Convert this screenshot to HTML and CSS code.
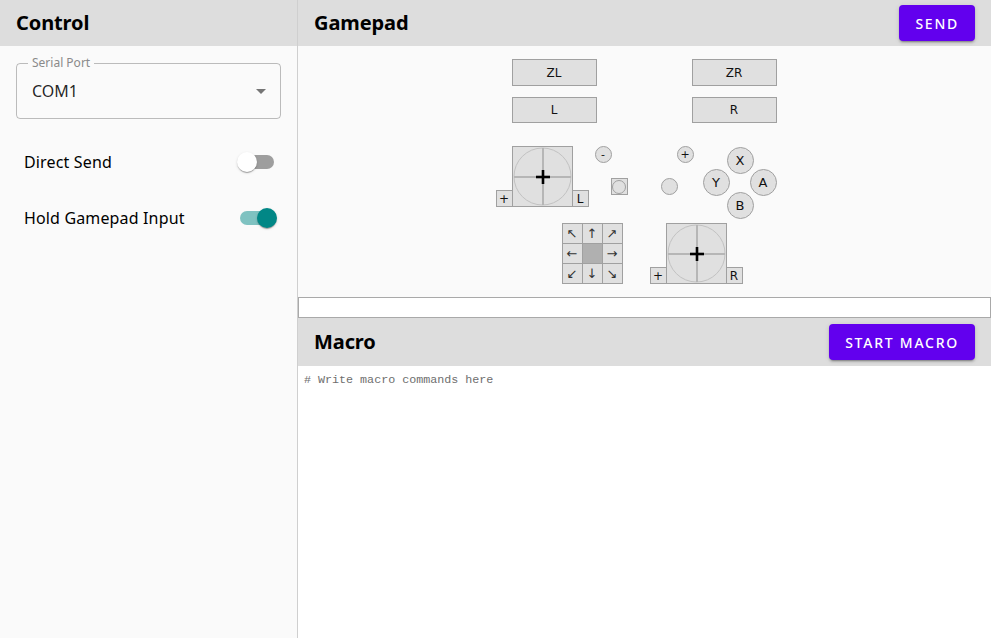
FILE: index.html
```html
<!DOCTYPE html>
<html lang="en">
<head>
<meta charset="utf-8">
<title>Controller</title>
<link rel="stylesheet" href="styles.css">
</head>
<body>
<div class="app">
  <aside class="sidebar">
    <header class="panel-header">
      <h2 class="panel-title">Control</h2>
    </header>
    <div class="sidebar-body">
      <div class="select-box">
        <span class="select-label">Serial Port</span>
        <span class="select-value">COM1</span>
        <svg class="select-arrow" width="10" height="5" viewBox="0 0 10 5"><path d="M0 0l5 5 5-5z" fill="#757575"/></svg>
      </div>
      <div class="switch-list">
        <div class="switch-row">
          <span class="switch-label">Direct Send</span>
          <span class="switch">
            <span class="switch-track"></span>
            <span class="switch-thumb"></span>
          </span>
        </div>
        <div class="switch-row">
          <span class="switch-label">Hold Gamepad Input</span>
          <span class="switch switch-on">
            <span class="switch-track"></span>
            <span class="switch-thumb"></span>
          </span>
        </div>
      </div>
    </div>
  </aside>
  <main class="main">
    <header class="panel-header">
      <h2 class="panel-title">Gamepad</h2>
      <button class="btn">SEND</button>
    </header>
    <section class="gamepad-area">
      <div class="gp-canvas">
        <div class="gp gp-rect gp-zl">ZL</div>
        <div class="gp gp-rect gp-zr">ZR</div>
        <div class="gp gp-rect gp-l">L</div>
        <div class="gp gp-rect gp-r">R</div>

        <div class="gp stick stick-left">
          <svg width="59" height="59" viewBox="0 0 59 59">
            <circle cx="29.5" cy="29.5" r="28.5" fill="#e0e0e0" stroke="#c2c2c2" stroke-width="1"/>
            <line x1="1" y1="30" x2="58" y2="30" stroke="#b6b6b6" stroke-width="2"/>
            <line x1="30" y1="1" x2="30" y2="58" stroke="#b6b6b6" stroke-width="2"/>
            <line x1="23" y1="30" x2="37" y2="30" stroke="#000" stroke-width="2.6"/>
            <line x1="30" y1="23" x2="30" y2="37" stroke="#000" stroke-width="2.6"/>
          </svg>
        </div>
        <div class="gp gp-small gp-lplus">+</div>
        <div class="gp gp-small gp-lstick">L</div>

        <div class="gp gp-circ-sm gp-minus">-</div>
        <div class="gp gp-capture"><span class="capture-dot"></span></div>
        <div class="gp gp-circ-sm gp-home"></div>
        <div class="gp gp-circ-sm gp-plus">+</div>

        <div class="gp gp-face gp-x">X</div>
        <div class="gp gp-face gp-y">Y</div>
        <div class="gp gp-face gp-a">A</div>
        <div class="gp gp-face gp-b">B</div>

        <div class="gp dpad">
          <span class="dcell">↖</span>
          <span class="dcell">↑</span>
          <span class="dcell">↗</span>
          <span class="dcell">←</span>
          <span class="dcell dcenter"></span>
          <span class="dcell">→</span>
          <span class="dcell">↙</span>
          <span class="dcell">↓</span>
          <span class="dcell">↘</span>
        </div>

        <div class="gp stick stick-right">
          <svg width="59" height="59" viewBox="0 0 59 59">
            <circle cx="29.5" cy="29.5" r="28.5" fill="#e0e0e0" stroke="#c2c2c2" stroke-width="1"/>
            <line x1="1" y1="30" x2="58" y2="30" stroke="#b6b6b6" stroke-width="2"/>
            <line x1="30" y1="1" x2="30" y2="58" stroke="#b6b6b6" stroke-width="2"/>
            <line x1="23" y1="30" x2="37" y2="30" stroke="#000" stroke-width="2.6"/>
            <line x1="30" y1="23" x2="30" y2="37" stroke="#000" stroke-width="2.6"/>
          </svg>
        </div>
        <div class="gp gp-small gp-rplus">+</div>
        <div class="gp gp-small gp-rstick">R</div>
      </div>
    </section>
    <input class="raw-input" type="text">
    <header class="panel-header macro-header">
      <h2 class="panel-title">Macro</h2>
      <button class="btn">START MACRO</button>
    </header>
    <textarea class="macro-text" placeholder="# Write macro commands here"></textarea>
  </main>
</div>
</body>
</html>
```

FILE: styles.css
```css
* { box-sizing: border-box; }

html, body {
  margin: 0;
  padding: 0;
  height: 100%;
}

body {
  font-family: "Noto Sans", "Liberation Sans", sans-serif;
  color: rgba(0, 0, 0, 0.87);
  background: #fafafa;
  overflow: hidden;
}

.app {
  display: flex;
  height: 100vh;
}

.sidebar {
  width: 298px;
  flex: none;
  background: #fafafa;
  border-right: 1px solid #cfcfcf;
  display: flex;
  flex-direction: column;
}

.panel-header {
  height: 46px;
  flex: none;
  background: #dddddd;
  display: flex;
  align-items: center;
  justify-content: space-between;
  padding: 0 16px;
}

.panel-title {
  margin: 0 0 1px 0;
  font-size: 20px;
  font-weight: 700;
  color: #000;
  letter-spacing: -0.1px;
}

.sidebar-body {
  padding: 17px 16px 0 16px;
}

.select-box {
  position: relative;
  height: 56px;
  border: 1px solid rgba(0, 0, 0, 0.25);
  border-radius: 4px;
  display: flex;
  align-items: center;
  padding: 0 14px 0 15px;
}

.select-label {
  position: absolute;
  left: 11px;
  top: -9px;
  padding: 0 4px;
  background: #fafafa;
  font-size: 12px;
  line-height: 16px;
  color: #8a8a8a;
}

.select-value {
  flex: 1;
  font-size: 16px;
  color: rgba(0, 0, 0, 0.87);
}

.select-arrow {
  flex: none;
}

.switch-list {
  margin-top: 15px;
  display: flex;
  flex-direction: column;
}

.switch-row {
  height: 56px;
  display: flex;
  align-items: center;
  justify-content: space-between;
  padding: 0 4px 0 8px;
}

.switch-label {
  font-size: 16px;
  color: #000;
  letter-spacing: 0.15px;
}

.switch {
  position: relative;
  width: 40px;
  height: 20px;
  display: flex;
  align-items: center;
  justify-content: center;
}

.switch-track {
  width: 34px;
  height: 14px;
  border-radius: 7px;
  background: #9e9e9e;
}

.switch-thumb {
  position: absolute;
  top: 0;
  left: 0;
  width: 20px;
  height: 20px;
  border-radius: 50%;
  background: #ffffff;
  box-shadow: 0 2px 1px -1px rgba(0,0,0,0.2), 0 1px 1px 0 rgba(0,0,0,0.14), 0 1px 3px 0 rgba(0,0,0,0.12);
}

.switch-on .switch-track {
  background: #7fc2c1;
}

.switch-on .switch-thumb {
  left: auto;
  right: 0;
  background: #018786;
}

.main {
  flex: 1;
  display: flex;
  flex-direction: column;
  min-width: 0;
}

.btn {
  height: 36px;
  padding: 0 16px;
  border: none;
  border-radius: 4px;
  background: #6200ee;
  color: #fff;
  font-family: "Noto Sans", "Liberation Sans", sans-serif;
  font-size: 14px;
  font-weight: 500;
  letter-spacing: 1.75px;
  box-shadow: 0 3px 1px -2px rgba(0,0,0,0.2), 0 2px 2px 0 rgba(0,0,0,0.14), 0 1px 5px 0 rgba(0,0,0,0.12);
}

.gamepad-area {
  height: 251px;
  flex: none;
  background: #fafafa;
}

.gp-canvas {
  position: relative;
  width: 266px;
  height: 100%;
  margin: 0 auto;
}

.gp {
  position: absolute;
  background: #e0e0e0;
  border: 1px solid #a0a0a0;
  display: flex;
  align-items: center;
  justify-content: center;
  font-family: "DejaVu Sans", "Noto Sans", sans-serif;
  color: #111;
}

.gp-rect {
  width: 85px;
  height: 27px;
  font-size: 12px;
}

.gp-zl { left: 0; top: 13px; }
.gp-zr { left: 180px; top: 13px; }
.gp-l  { left: 0; top: 51px; height: 26px; }
.gp-r  { left: 180px; top: 51px; height: 26px; }

.stick {
  width: 61px;
  height: 61px;
}

.stick-left  { left: 0; top: 100px; }
.stick-right { left: 154px; top: 177px; }

.gp-small {
  width: 17px;
  height: 17px;
  font-size: 12px;
  line-height: 1;
}

.gp-lplus  { left: -16px; top: 144px; }
.gp-lstick { left: 60px; top: 144px; }
.gp-rplus  { left: 138px; top: 221px; }
.gp-rstick { left: 214px; top: 221px; }

.gp-circ-sm {
  width: 17px;
  height: 17px;
  border-radius: 50%;
  font-size: 11px;
  line-height: 1;
}

.gp-minus { left: 83px; top: 100px; }
.gp-home  { left: 149px; top: 132px; }
.gp-plus  { left: 165px; top: 100px; }

.gp-capture {
  left: 99px;
  top: 132px;
  width: 17px;
  height: 17px;
}

.capture-dot {
  width: 14px;
  height: 14px;
  border-radius: 50%;
  border: 1px solid #a0a0a0;
}

.gp-face {
  width: 27px;
  height: 27px;
  border-radius: 50%;
  font-size: 13px;
}

.gp-x { left: 215px; top: 101px; }
.gp-y { left: 191px; top: 123px; }
.gp-a { left: 238px; top: 123px; }
.gp-b { left: 215px; top: 146px; }

.dpad {
  left: 50px;
  top: 177px;
  width: 61px;
  height: 61px;
  display: grid;
  grid-template-columns: repeat(3, 1fr);
  grid-template-rows: repeat(3, 1fr);
  align-items: stretch;
  justify-content: stretch;
  gap: 1px;
  background: #a0a0a0;
  border: 1px solid #a0a0a0;
}

.dcell {
  background: #e0e0e0;
  display: flex;
  align-items: center;
  justify-content: center;
  font-size: 13px;
  color: #333;
  line-height: 1;
}

.dcenter {
  background: #b0b0b0;
}

.raw-input {
  display: block;
  width: 100%;
  height: 21px;
  margin: 0;
  border: 1px solid #a9a9a9;
  background: #fff;
  flex: none;
}

.macro-header {
  height: 48px;
}

.macro-text {
  flex: 1;
  width: 100%;
  border: none;
  resize: none;
  background: #fff;
  padding: 7px 6px;
  margin: 0;
  font-family: "Liberation Mono", "DejaVu Sans Mono", monospace;
  font-size: 11.7px;
  line-height: 14px;
  outline: none;
}

.macro-text::placeholder {
  color: #6e6e6e;
}
```
